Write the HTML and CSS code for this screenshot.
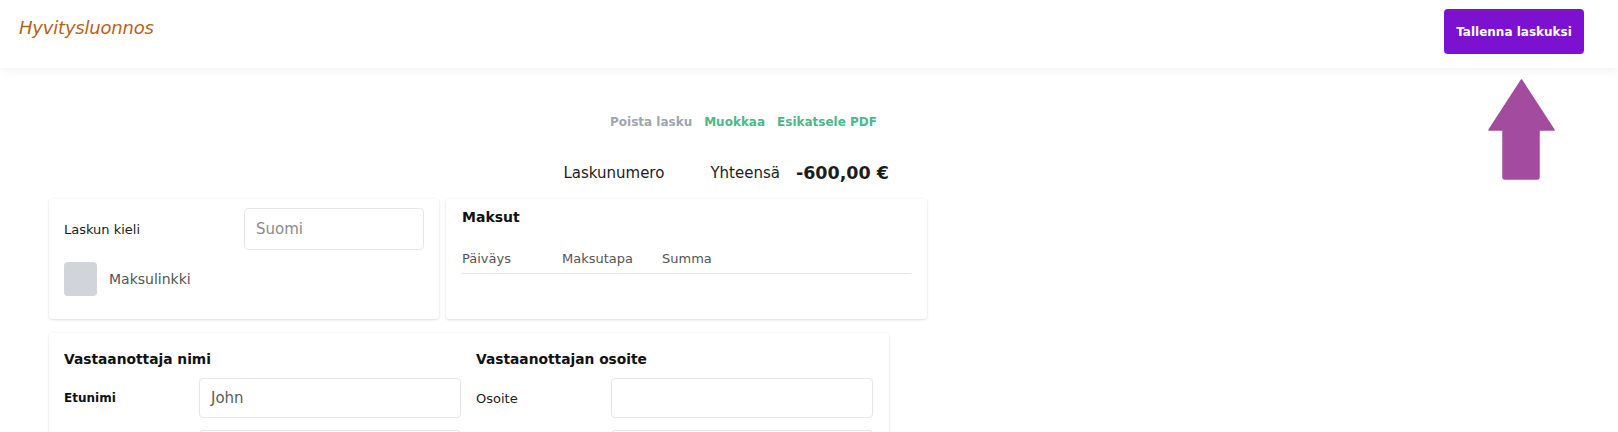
FILE: index.html
```html
<!DOCTYPE html>
<html lang="fi">
<head>
<meta charset="utf-8">
<title>Hyvitysluonnos</title>
<link rel="stylesheet" href="styles.css">
</head>
<body>
<header class="topbar">
  <h1 class="title">Hyvitysluonnos</h1>
  <button class="btn-save">Tallenna laskuksi</button>
</header>
<svg class="arrow" width="67" height="101" viewBox="0 0 67 101">
  <path d="M33.5 1 L66 51 L51 51 L51 98 Q51 100 49 100 L17 100 Q15 100 15 98 L15 51 L1 51 Z" fill="#a24b9f" stroke="#a24b9f" stroke-width="1.5" stroke-linejoin="round"/>
</svg>
<main class="content">
  <div class="actions">
    <a class="act act-gray">Poista lasku</a>
    <a class="act act-green">Muokkaa</a>
    <a class="act act-green">Esikatsele PDF</a>
  </div>
  <div class="totals">
    <span class="num-label">Laskunumero</span>
    <span class="sum-label">Yhteensä</span>
    <span class="sum">-600,00 €</span>
  </div>
  <div class="row">
    <section class="card card-lang">
      <div class="field">
        <span class="lbl">Laskun kieli</span>
        <div class="input input-sm placeholder">Suomi</div>
      </div>
      <div class="check-row">
        <span class="checkbox"></span>
        <span class="check-label">Maksulinkki</span>
      </div>
    </section>
    <section class="card card-pay">
      <h2 class="card-title">Maksut</h2>
      <div class="pay-head">
        <span class="ph ph-date">Päiväys</span>
        <span class="ph ph-method">Maksutapa</span>
        <span class="ph">Summa</span>
      </div>
    </section>
  </div>
  <section class="card card-recv">
    <div class="col">
      <h2 class="card-title">Vastaanottaja nimi</h2>
      <div class="frow">
        <span class="flbl bold">Etunimi</span>
        <div class="input">John</div>
      </div>
      <div class="frow">
        <span class="flbl"></span>
        <div class="input"></div>
      </div>
    </div>
    <div class="col">
      <h2 class="card-title">Vastaanottajan osoite</h2>
      <div class="frow">
        <span class="flbl">Osoite</span>
        <div class="input"></div>
      </div>
      <div class="frow">
        <span class="flbl"></span>
        <div class="input"></div>
      </div>
    </div>
  </section>
</main>
</body>
</html>
```
FILE: styles.css
```css
* { box-sizing: border-box; }
html, body { margin: 0; padding: 0; background: #ffffff; }
body {
  font-family: "DejaVu Sans", "Noto Sans", sans-serif;
  color: #1c1c1c;
  width: 1618px;
  height: 432px;
  overflow: hidden;
  position: relative;
}
.topbar {
  height: 68px;
  display: flex;
  align-items: flex-start;
  justify-content: space-between;
  padding: 0 34px 0 19px;
  background: #fff;
  box-shadow: 0 3px 10px rgba(0, 0, 0, 0.05);
  position: relative;
  z-index: 1;
}
.title {
  margin: 17px 0 0;
  font-size: 18px;
  font-weight: 400;
  font-style: italic;
  color: #b5611b;
  letter-spacing: -0.2px;
}
.btn-save {
  margin-top: 9px;
  width: 140px;
  height: 45px;
  border: none;
  border-radius: 4px;
  background: #7c12cf;
  color: #fff;
  font-family: inherit;
  font-size: 12px;
  font-weight: 700;
  padding: 0;
}
.arrow {
  position: absolute;
  left: 1488px;
  top: 79px;
}
.content {
  padding: 0 0 0 49px;
}
.actions {
  width: 840px;
  display: flex;
  justify-content: flex-end;
  gap: 12px;
  margin-top: 43px;
  padding-right: 12px;
  height: 22px;
  line-height: 22px;
}
.act {
  font-size: 12px;
  font-weight: 700;
  cursor: pointer;
}
.act-gray { color: #a1a5ae; }
.act-green { color: #4db78a; }
.totals {
  width: 840px;
  display: flex;
  justify-content: flex-end;
  align-items: center;
  height: 38px;
  margin-top: 21px;
}
.num-label { font-size: 15px; margin-right: 46px; }
.sum-label { font-size: 15px; margin-right: 16px; }
.sum { font-size: 17.5px; font-weight: 700; }
.row {
  display: flex;
  gap: 7px;
  margin-top: 7px;
}
.card {
  background: #fff;
  border-radius: 3px;
  box-shadow: 0 1px 3px rgba(0, 0, 0, 0.12), 0 0 2px rgba(0, 0, 0, 0.04);
}
.card-lang {
  width: 390px;
  height: 120px;
  padding: 9px 15px 0 15px;
}
.field {
  display: flex;
  justify-content: space-between;
  align-items: center;
}
.lbl { font-size: 13px; }
.input {
  border: 1px solid #e4e6ea;
  border-radius: 4px;
  height: 40px;
  flex: 1;
  display: flex;
  align-items: center;
  padding: 0 11px;
  font-size: 15px;
  color: #5b5b5b;
}
.input-sm {
  flex: 0 0 180px;
  height: 42px;
}
.placeholder { color: #8a8a8a; }
.check-row {
  display: flex;
  align-items: center;
  margin-top: 12px;
  gap: 12px;
}
.checkbox {
  width: 33px;
  height: 34px;
  border-radius: 4px;
  background: #d1d5db;
}
.check-label { font-size: 14px; color: #555; }
.card-pay {
  width: 481px;
  height: 120px;
  padding: 8px 16px 0 16px;
}
.card-title {
  margin: 0;
  font-size: 14px;
  font-weight: 700;
  line-height: 20px;
  color: #111;
}
.pay-head {
  display: flex;
  margin-top: 24px;
  padding-bottom: 7px;
  border-bottom: 1px solid #e5e7eb;
  font-size: 13px;
  color: #555;
}
.ph-date { width: 100px; }
.ph-method { width: 100px; }
.card-recv {
  margin-top: 14px;
  width: 840px;
  height: 140px;
  display: flex;
  gap: 15px;
  padding: 16px 16px 0 15px;
}
.card-recv .card-title { font-size: 13.8px; }
.col { flex: 1; }
.frow {
  display: flex;
  align-items: center;
  margin-top: 9px;
}
.frow + .frow { margin-top: 12px; }
.flbl {
  width: 135px;
  flex: 0 0 135px;
  font-size: 13px;
  color: #222;
}
.bold { font-weight: 700; font-size: 12px; color: #111; }
```
